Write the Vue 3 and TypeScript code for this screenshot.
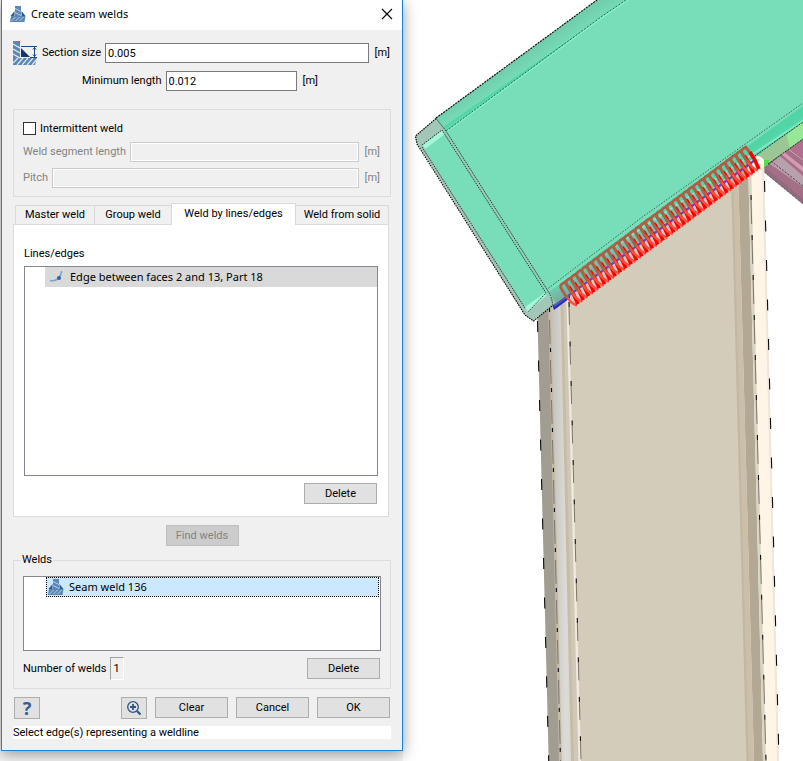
<script setup lang="ts">
import { ref } from 'vue'

const sectionSize = ref('0.005')
const minLength = ref('0.012')
const intermittent = ref(false)
const segmentLength = ref('')
const pitch = ref('')
const tabs = ['Master weld', 'Group weld', 'Weld by lines/edges', 'Weld from solid']
const activeTab = ref(2)
const edges = ref(['Edge between faces 2 and 13, Part 18'])
const welds = ref(['Seam weld 136'])

interface Coil {
  id: number
  shift: string
}

const coils: Coil[] = Array.from({ length: 35 }, (_, i) => ({
  id: i,
  shift: `translate(${(i * 5.32).toFixed(2)} ${(i * -3.97).toFixed(2)})`,
}))
</script>

<template>
  <main class="workspace">
    <svg class="defs" aria-hidden="true">
      <defs>
        <symbol id="seam" viewBox="0 0 16 16">
          <path d="M5 0h6v10h4.500l-1 6H0l1-6h4z" fill="#5b87b5" />
          <path d="M5 2.500l6 3M5 6.500l6 3M1.500 15l4-4M5.500 15l4-4M9.500 15l4-4" stroke="#c5d6e8" stroke-width=".9" />
          <path d="M4.500 5v5H.5zM11.500 5v5h4z" fill="#2a5c98" />
        </symbol>
      </defs>
    </svg>

    <section class="dialog" role="dialog" aria-labelledby="dlg-title">
      <header class="titlebar">
        <svg class="icon16"><use href="#seam" /></svg>
        <h1 id="dlg-title">Create seam welds</h1>
        <button class="close" type="button" aria-label="Close">
          <svg viewBox="0 0 12 12"><path d="M1 1l10 10M11 1L1 11" stroke="#000" stroke-width="1.1" /></svg>
        </button>
      </header>

      <form class="body" @submit.prevent>
        <div class="row size-row">
          <svg class="size-icon" viewBox="0 0 24 24">
            <path d="M0 0h7v17h17l-2 7H0z" fill="#5b87b5" />
            <path d="M0 3l7 4M0 8l7 4M0 13l7 4M0 22l5-5M4 24l6-7M9 24l6-7M14 24l6-7M19 24l5-6" stroke="#e3ebf3" stroke-width="1.2" />
            <path d="M8 7l9 9H8z" fill="#12386e" />
            <path d="M8 5.500h16M17 16.500h7M21.500 6v10M20 8.500l1.500-2 1.500 2M20 13.500l1.500 2 1.500-2" fill="none" stroke="#174a86" />
          </svg>
          <label for="section-size">Section size</label>
          <input id="section-size" v-model="sectionSize" type="text" />
          <span class="unit">[m]</span>
        </div>
        <div class="row length-row">
          <label for="min-length">Minimum length</label>
          <input id="min-length" v-model="minLength" type="text" />
          <span class="unit">[m]</span>
        </div>

        <div class="group">
          <label class="check"><input v-model="intermittent" type="checkbox" />Intermittent weld</label>
          <div class="row">
            <label class="off" for="seg-length">Weld segment length</label>
            <input id="seg-length" v-model="segmentLength" type="text" disabled />
            <span class="unit off">[m]</span>
          </div>
          <div class="row">
            <label class="off" for="pitch">Pitch</label>
            <input id="pitch" v-model="pitch" type="text" disabled />
            <span class="unit off">[m]</span>
          </div>
        </div>

        <div class="tabs" role="tablist">
          <button
            v-for="(tab, i) in tabs"
            :key="tab"
            type="button"
            role="tab"
            :aria-selected="i === activeTab"
            :class="{ active: i === activeTab }"
            @click="activeTab = i"
          >{{ tab }}</button>
        </div>
        <div class="panel" role="tabpanel">
          <span id="edges-label" class="caption">Lines/edges</span>
          <ul class="list edges" role="listbox" aria-labelledby="edges-label">
            <li v-for="edge in edges" :key="edge" role="option" class="picked">
              <svg class="icon16" viewBox="0 0 16 16">
                <path d="M1 11.500Q7 12.500 9.500 9Q12.500 6 12.500 2" fill="none" stroke="#7ba3cc" stroke-width="1.500" />
                <circle cx="10" cy="9" r="2" fill="#2a65a8" />
              </svg>
              {{ edge }}
            </li>
          </ul>
          <div class="right"><button class="btn" type="button">Delete</button></div>
        </div>

        <button class="btn find" type="button" disabled>Find welds</button>

        <fieldset>
          <legend>Welds</legend>
          <ul class="list welds" role="listbox" aria-label="Welds">
            <li v-for="weld in welds" :key="weld" role="option" class="focused">
              <svg class="icon16"><use href="#seam" /></svg>
              {{ weld }}
            </li>
          </ul>
          <div class="count-row">
            <span>Number of welds</span>
            <output>{{ welds.length }}</output>
            <button class="btn" type="button">Delete</button>
          </div>
        </fieldset>

        <footer class="actions">
          <button class="btn square help" type="button">?</button>
          <button class="btn square zoom" type="button" aria-label="Zoom">
            <svg viewBox="0 0 16 16" fill="none" stroke="#2d5686">
              <circle cx="7" cy="7" r="5.300" stroke-width="1.300" />
              <path d="M4 7h6M7 4v6" stroke-width="1.800" />
              <path d="M11 11l3.500 3.500" stroke-width="2.200" />
            </svg>
          </button>
          <button class="btn" type="reset">Clear</button>
          <button class="btn" type="button">Cancel</button>
          <button class="btn" type="submit">OK</button>
        </footer>
        <p class="status">Select edge(s) representing a weldline</p>
      </form>
    </section>

    <svg class="scene" viewBox="403 0 400 761" preserveAspectRatio="xMinYMin slice">
      <defs>
        <linearGradient id="flange" gradientUnits="userSpaceOnUse" x1="552" y1="0" x2="575" y2="0">
          <stop offset="0" stop-color="#c5c2bc" /><stop offset=".6" stop-color="#dddbd7" />
          <stop offset="1" stop-color="#d8d4cb" />
        </linearGradient>
        <linearGradient id="lip" gradientUnits="userSpaceOnUse" x1="640" y1="223" x2="650" y2="238">
          <stop offset="0" stop-color="#52d5a6" /><stop offset=".22" stop-color="#55d8aa" />
          <stop offset=".28" stop-color="#8beecb" /><stop offset=".38" stop-color="#6bcdae" /><stop offset="1" stop-color="#7cae9c" />
        </linearGradient>
        <linearGradient id="topband" gradientUnits="userSpaceOnUse" x1="500" y1="73" x2="509" y2="86">
          <stop offset="0" stop-color="#72cfae" /><stop offset=".74" stop-color="#76dab6" />
          <stop offset=".8" stop-color="#51d4a4" /><stop offset="1" stop-color="#5cdbb0" />
        </linearGradient>
      </defs>

      <rect x="403" width="400" height="761" fill="#fff" />

      <!-- purple brace -->
      <path d="M758 162L803 126V204L764 172z" fill="#916b7e" />
      <path d="M766 168L803 139V199z" fill="#a66f88" />
      <path d="M780 156L803 139V158L789 149z" fill="#b27090" />
      <path d="M770 164L780 156L803 176V187z" fill="#b8a0ac" />
      <path d="M784 152L803 167V172L781 154z" fill="#d59bb5" />
      <path d="M788 149L803 160" stroke="#d5a0b8" />
      <path d="M771 161L803 186" stroke="#2b2025" stroke-dasharray="2 1.500" stroke-width=".8" />
      <path d="M764 172L803 204" stroke="#4d3542" stroke-dasharray="1 1" />

      <!-- green strip -->
      <path d="M752 157L803 122V139L763 167z" fill="#98e796" />
      <path d="M752 157L786 134L790 148L763 167z" fill="#9bc795" />
      <path d="M761 160l8 0-1 5-5 3z" fill="#4fdb4c" />
      <path d="M768 164L803 139" stroke="#163e16" stroke-dasharray="2 1" />

      <!-- column -->
      <g>
        <path d="M537 300L548.700 761H560L549 300z" fill="#a29d92" />
        <path d="M548 300L559 761H563L552 290z" fill="#c5baa8" />
        <path d="M551 290L562 761H580L567 270z" fill="#d0c8b7" />
        <path d="M551 290L562 761H572L561 270z" fill="url(#flange)" />
        <path d="M560 285L571 761H574L563 285z" fill="#c6bda9" />
        <path d="M566 285L578.500 761H581L568.500 285z" fill="#f2eadf" />
        <path d="M568 285L581 761H747L731 160z" fill="#d4ccba" />
        <path d="M731 175L746.500 761H754L738 168z" fill="#cbbfa9" />
        <path d="M731 175L746.500 761H748.500L733 173z" fill="#c1b7a3" />
        <path d="M738 168L754 761H763L748 160z" fill="#b3a893" />
        <path d="M748 160L763 761H768L753 160z" fill="#dad5c3" />
        <path d="M751 160Q758 152 764 160L779 761H766z" fill="#fff5e7" />
        <path d="M762 166L777 761H779L764 166z" fill="#eee6d8" />
        <g fill="none" stroke="#0b0b0b" stroke-width="1.100">
          <path d="M537.500 321L548.700 761" stroke-dasharray="11 28.500" />
          <path d="M549.500 308L560.500 761" stroke-dasharray="4 36" />
          <path d="M569 302L581 761" stroke-dasharray="5 34.500" />
          <path d="M751 195L766 761" stroke-dasharray="5 35" />
          <path d="M764.500 181L779 761" stroke-dasharray="11 28.500" />
        </g>
        <g fill="none" stroke="#7d766a" stroke-width="1">
          <path d="M549.500 320L560.500 761" stroke-dasharray="24 16" />
          <path d="M569 307L581 761" stroke-dasharray="18 21.500" />
          <path d="M751 200L766 761" stroke-dasharray="24 16" />
        </g>
      </g>

      <!-- blue weld line under the beam -->
      <path d="M552 304L570 290V298L554 310z" fill="#2727b4" />
      <path d="M554 306L755 160" stroke="#5252c4" stroke-width="2.500" />

      <!-- beam -->
      <path d="M415 137L436 118L597 0H803V122L552 306L533 321L525 315L417 143z" fill="#78deba" />
      <path d="M436 118L597 0H626L603 16L446 132z" fill="url(#topband)" />
      <path d="M446 132L603 17L628 0" fill="none" stroke="#83f3cb" stroke-width="1.500" />
      <path d="M446 131L603 15.500L626 0" fill="none" stroke="#204436" stroke-dasharray="2 1.500" stroke-width=".8" />
      <path d="M548 291L641 223L803 106V122L552 306z" fill="url(#lip)" />
      <path d="M546 290L641 218L741 147L803 103" fill="none" stroke="#24483b" stroke-dasharray="1.500 1.500" stroke-width=".8" />
      <path d="M752 158L803 122" stroke="#173c2f" stroke-dasharray="2 1" />
      <path d="M436 118L597 0" stroke="#111" stroke-dasharray="2 1" stroke-width="1.200" />

      <!-- end plate -->
      <path d="M415 136L436 118.500L446 131L442 130L422 145L528 311L546 293L553 305L533.500 321L525 315L417 143z" fill="#a2c6b7" />
      <path d="M423 145L442 130.500L445 134L425 149z" fill="#a6f7da" />
      <path d="M525 307L546 292V296L528 312z" fill="#a6f7da" />
      <path d="M442 130L548 293L553 305L555 302L548 290L445 131z" fill="#a2c6b7" />
      <g fill="none" stroke="#1b2722" stroke-dasharray="1.500 1" stroke-width=".9">
        <path d="M436 118.500L415.500 136L417 144L525 315L533.500 321L552 306" stroke="#000" stroke-width="1.100" />
        <path d="M436 118.500L446 131L548 291Q552 297 553 306" />
        <path d="M422 145L442 130L546 293L528 312" />
        <path d="M422 147L525 308" />
      </g>

      <!-- weld coil -->
      <g fill="none">
        <g v-for="coil in coils" :key="coil.id" :transform="coil.shift">
          <path d="M566 295Q570 303 577 305.500" stroke="#ff4f42" stroke-width="2.600" />
          <path d="M566 282Q558 284 562 290L567 298" stroke="#ab6149" stroke-width="2.800" />
          <path d="M564 281L571 290" stroke="#b45a43" stroke-width="2.800" />
          <path d="M569 287Q574 294 578 304" stroke="#fe0000" stroke-width="3.700" />
        </g>
      </g>
    </svg>
  </main>
</template>

<style>
body {
  margin: 0;
  background: #f4f4f4;
}
</style>

<style scoped>
* {
  box-sizing: border-box;
}

.workspace {
  display: grid;
  grid-template-columns: minmax(0, 403fr) minmax(0, 400fr);
  align-items: start;
  min-height: 100vh;
  overflow: hidden;
  font: 11px/14px Roboto, "Liberation Sans", sans-serif;
  color: #000;
}

.defs {
  position: absolute;
  width: 0;
  height: 0;
}

.scene {
  display: block;
  width: 100%;
  height: 100vh;
}

.dialog {
  position: relative;
  z-index: 1;
  margin-left: 1px;
  border: 1px solid #1883d7;
  border-top: 0;
  background: #f0f0f0;
  box-shadow: 0 3px 14px rgba(0, 0, 0, 0.4);
}

.titlebar {
  display: flex;
  align-items: center;
  gap: 5px;
  height: 30px;
  padding: 0 9px 2px 8px;
  background: #fff;
}

h1 {
  flex: 1;
  margin: 0;
  font: 11px/16px "Noto Sans", "Open Sans", sans-serif;
}

.icon16 {
  flex: none;
  width: 16px;
  height: 16px;
}

button {
  font: inherit;
  color: inherit;
}

.close {
  display: flex;
  padding: 0;
  border: 0;
  background: none;
}

.close svg {
  width: 12px;
  height: 12px;
}

.body {
  padding: 11px;
}

.row {
  display: flex;
  align-items: center;
  gap: 6px;
}

.row label {
  margin-right: -2px;
}

.row input {
  flex: 1;
  min-width: 0;
  height: 20px;
  padding: 0 2px;
  border: 1px solid #7a7a7a;
  background: #fff;
  font: inherit;
  color: #000;
}

.row input:disabled {
  border-color: #ccc;
  background: #f0f0f0;
  box-shadow: inset 0 0 0 1px #fff;
}

.size-row {
  padding-right: 1px;
}

.size-icon {
  width: 24px;
  height: 24px;
  margin-right: -1px;
}

.length-row {
  margin-top: 6px;
  padding: 0 73px 0 69px;
}

.off {
  color: #838383;
}

.group {
  display: grid;
  gap: 6px;
  margin-top: 18px;
  padding: 11px 10px 8px 9px;
  border: 1px solid #dcdcdc;
}

.check {
  display: flex;
  align-items: center;
  gap: 4px;
  height: 15px;
}

.check input {
  appearance: none;
  width: 13px;
  height: 13px;
  margin: 0;
  border: 1px solid #333;
  background: #fff;
}

.check input:checked {
  box-shadow: inset 0 0 0 2px #fff;
  background: #333;
}

.tabs {
  display: grid;
  grid-template-columns: 80fr 77fr 124fr 93fr;
  align-items: end;
  margin: 6px 2px 0;
}

.tabs button {
  height: 19px;
  margin-left: -1px;
  padding: 0;
  border: 1px solid #d9d9d9;
  border-bottom: 0;
  background: #f0f0f0;
  white-space: nowrap;
}

.tabs button:first-child {
  margin-left: 0;
}

.tabs .active {
  position: relative;
  height: 22px;
  margin-bottom: -1px;
  padding-bottom: 2px;
  background: #fff;
}

.panel {
  margin-right: 2px;
  padding: 22px 10px 12px;
  border: 1px solid #dcdcdc;
  background: #fff;
}

.caption {
  display: block;
  margin-bottom: 5px;
}

.list {
  margin: 0;
  padding: 0;
  border: 1px solid #828790;
  background: #fff;
  list-style: none;
  overflow: auto;
}

.list li {
  display: flex;
  align-items: center;
  gap: 5px;
  height: 20px;
  margin-left: 20px;
  padding-left: 4px;
  font: 11px/16px "Noto Sans", "Open Sans", sans-serif;
}

.edges {
  height: 210px;
}

.welds {
  height: 75px;
}

.list .picked {
  background: #d9d9d9;
}

.list .focused {
  margin-left: 22px;
  margin-right: 1px;
  padding-left: 1px;
  border: 1px dotted #000;
  background: #cce8ff;
}

.right {
  display: flex;
  justify-content: flex-end;
  margin: 7px 1px 0 0;
}

.btn {
  width: 73px;
  height: 21px;
  padding: 0;
  border: 1px solid #adadad;
  background: #e1e1e1;
}

.btn:disabled {
  border-color: #bfbfbf;
  background: #ccc;
  color: #838383;
}

.find {
  display: block;
  margin: 8px auto 0;
}

fieldset {
  min-width: 0;
  margin: 7px 0 0;
  padding: 9px 9px 8px;
  border: 1px solid #dcdcdc;
}

legend {
  margin-left: -2px;
  padding: 0 1px;
}

.count-row {
  display: flex;
  align-items: center;
  gap: 3px;
  margin-top: 6px;
  padding-right: 1px;
}

.count-row output {
  width: 14px;
  height: 23px;
  border: 1px solid #a0a0a0;
  border-right-color: #fff;
  border-bottom-color: #fff;
  line-height: 22px;
  text-align: center;
}

.count-row .btn {
  margin-left: auto;
}

.actions {
  display: flex;
  gap: 8px;
  margin-top: 8px;
  padding: 0 1px;
}

.btn.square {
  display: grid;
  place-items: center;
  width: 26px;
  height: 22px;
}

.help {
  font: bold 18px/18px "Noto Sans", sans-serif;
  color: #355f8e;
}

.zoom {
  margin-left: auto;
}

.zoom svg {
  width: 16px;
  height: 16px;
}

.status {
  margin: 7px 0 0;
  background: #fff;
  line-height: 13px;
}
</style>
